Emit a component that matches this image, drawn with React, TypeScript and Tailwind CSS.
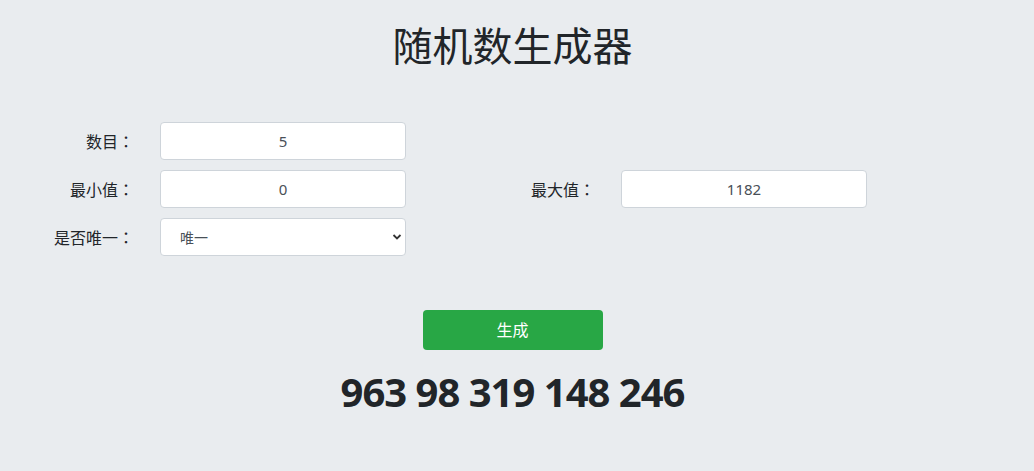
import { useState } from 'react';

const font = 'font-["Segoe_UI","Noto_Sans","Noto_Sans_CJK_SC",sans-serif]';

function Field({ label, children }: { label: string; children: React.ReactNode }) {
  return (
    <div className="flex items-center">
      <label className='w-[130px] pr-[11px] text-right text-[16px] text-[#212529] font-["Noto_Sans_CJK_TC",sans-serif]'>
        {label}
      </label>
      <div className="ml-[15px] w-[246px]">{children}</div>
    </div>
  );
}

const inputCls =
  'w-full h-[38px] rounded-[4px] border border-[#ced4da] bg-white text-center text-[15px] text-[#495057] outline-none';

export default function App() {
  const [count, setCount] = useState('5');
  const [min, setMin] = useState('0');
  const [max, setMax] = useState('1182');
  const [unique, setUnique] = useState('1');

  return (
    <div className={`min-h-[471px] w-full bg-[#e9ecef] ${font}`}>
      <div className="pr-[9px]">
        <h1 className="pt-[20px] text-center text-[40px] leading-[52px] text-[#212529] font-normal">
          随机数生成器
        </h1>
      </div>

      <div className="mt-[50px] pl-[15px] flex flex-col gap-[10px]">
        <div className="flex">
          <Field label="数目：">
            <input className={inputCls} value={count} onChange={(e) => setCount(e.target.value)} />
          </Field>
        </div>
        <div className="flex gap-[70px]">
          <Field label="最小值：">
            <input className={inputCls} value={min} onChange={(e) => setMin(e.target.value)} />
          </Field>
          <Field label="最大值：">
            <input className={inputCls} value={max} onChange={(e) => setMax(e.target.value)} />
          </Field>
        </div>
        <div className="flex">
          <Field label="是否唯一：">
            <div className="relative">
              <select
                value={unique}
                onChange={(e) => setUnique(e.target.value)}
                className="w-full h-[38px] appearance-none rounded-[4px] border border-[#ced4da] bg-white pl-[19px] text-[14px] text-[#495057] outline-none"
              >
                <option value="1">唯一</option>
                <option value="0">不唯一</option>
              </select>
              <svg
                className="pointer-events-none absolute right-[4px] top-[15px]"
                width="10"
                height="8"
                viewBox="0 0 10 8"
              >
                <path d="M1.5 2 L5 5.5 L8.5 2" fill="none" stroke="#333" strokeWidth="1.8" />
              </svg>
            </div>
          </Field>
        </div>
      </div>

      <div className="mt-[54px] pr-[9px] flex flex-col items-center">
        <button className="w-[180px] h-[40px] rounded-[4px] bg-[#28a745] text-white text-[16px]">
          生成
        </button>
        <div className="mt-[12px] text-[40px] leading-[60px] font-bold text-[#212529] tracking-[-1px]">
          963 98 319 148 246
        </div>
      </div>
    </div>
  );
}
